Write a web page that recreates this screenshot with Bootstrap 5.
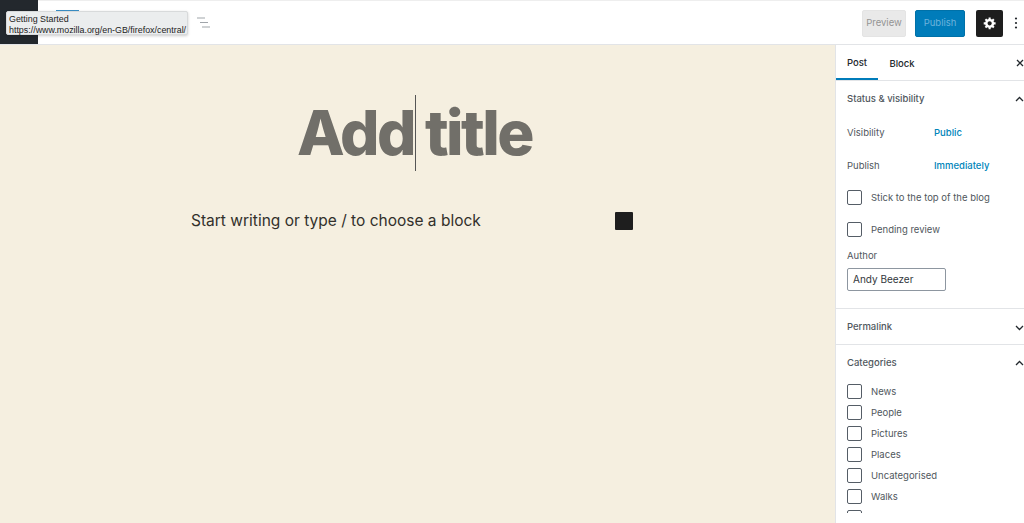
<!DOCTYPE html>
<html lang="en">
<head>
    <meta charset="UTF-8">
    <meta name="viewport" content="width=device-width, initial-scale=1.0">
    <title>Add title</title>
    <link href="https://cdn.jsdelivr.net/npm/bootstrap@5.3.0/dist/css/bootstrap.min.css" rel="stylesheet">
    <style>
        html, body { height: 100%; overflow: hidden; }
        body { font-family: "Inter", "Noto Sans", sans-serif; color: #23282d; background: #fff; }
        .editor-top { height: 45px; border-top: 1px solid #eee; border-bottom: 1px solid #e2e4e7; position: relative; }
        .wp-box { width: 38px; height: 44px; background: #23282d; margin-top: -1px; }
        .blue-tab { width: 23px; height: 2px; background: #3a8fc7; margin: 9px 0 0 18px; }
        .outline-icon { margin: 15px 0 0 117px; }
        .url-tip { position: absolute; left: 6px; top: 10px; width: 182px; height: 24px; padding: 2px 2px 0; background: #ebedee; border: 1px solid #d8dadb; border-radius: 2px; font-family: "Liberation Sans", sans-serif; font-size: 8.9px; line-height: 11px; color: #222; box-shadow: 0 1px 3px rgba(0,0,0,.2); white-space: nowrap; }
        .btn-preview { width: 44px; height: 27px; padding: 0; font-size: 9.5px; background: #e9e9e9; color: #949494; border: 1px solid #e4e4e4; border-radius: 2px; }
        .btn-publish { width: 50px; height: 27px; padding: 0; font-size: 9.5px; background: #007cba; color: #6db3dc; border: 1px solid #0071a8; border-radius: 2px; margin-left: 9px; }
        .btn-gear { width: 27px; height: 27px; padding: 0; background: #1e1e1e; border: 0; border-radius: 2px; display: flex; align-items: center; justify-content: center; margin-left: 11px; }
        .more-dots { margin: 0 6px 0 11px; }
        .editor-body { height: 478px; }
        .canvas-area { background: #f5efe0; }
        .title-row { margin-top: 50px; height: 76px; font-size: 62px; font-weight: 800; letter-spacing: -2.6px; line-height: 76px; color: #716f69; padding-left: 297px; white-space: nowrap; }
        .title-row span { display: inline-block; }
        .caret-line { display: inline-block; width: 1px; height: 76px; background: #555; vertical-align: top; margin: 0 9px 0 1px; }
        .block-row { width: 442px; margin: 38px 0 0 191px; font-size: 15.5px; line-height: 24px; color: #32302b; }
        .block-square { width: 18px; height: 18px; background: #1e1e1e; border-radius: 1px; }
        .side-panel { width: 189px; flex: none; border-left: 1px solid #e2e4e7; overflow: hidden; font-size: 9.5px; color: #50575d; }
        .tab-row { height: 36px; border-bottom: 1px solid #e2e4e7; font-size: 9.5px; color: #23282d; }
        .tab-item { height: 35px; padding-top: 3px; display: flex; align-items: center; justify-content: center; font-weight: 500; }
        .tab-post { width: 42px; border-bottom: 2px solid #007cba; }
        .tab-block { width: 48px; }
        .close-x { margin-left: auto; }
        .panel-part { border-bottom: 1px solid #e2e4e7; }
        .part-head { height: 36px; padding-left: 11px; display: flex; align-items: center; justify-content: space-between; color: #50575d; font-weight: 500; }
        .part-head svg { flex: none; }
        .permalink-head { height: 35px; padding-top: 2px; }
        .info-row { height: 33px; padding-left: 11px; display: flex; align-items: center; }
        .info-row > span:first-child { width: 87px; }
        .info-row a { color: #0085ba; text-decoration: none; font-weight: 500; }
        .tick-row { display: flex; align-items: center; gap: 9px; padding-left: 11px; height: 15px; flex: none; }
        .tick-row span { padding-top: 1px; line-height: 14px; }
        .tick-box { width: 15px; height: 15px; flex: none; border: 1px solid #555d66; border-radius: 2px; background: #fff; }
        .author-input { display: block; width: 99px; height: 23px; margin: 5px 0 0 11px; padding: 0 5px; font-size: 10px; line-height: 21px; color: #32373c; border: 1px solid #8d96a0; border-radius: 2px; }
        .cat-list { height: 129px; overflow: hidden; gap: 6px; margin-top: 3px; }
    </style>
</head>
<body>
    <header class="editor-top d-flex align-items-start">
        <div class="wp-box"></div>
        <div class="blue-tab"></div>
        <svg class="outline-icon" width="16" height="14" viewBox="0 0 16 14" fill="none" stroke="#a0a5aa" stroke-width="1.2">
            <path d="M1 2h8M4 6.500h8M6 11h8"/>
        </svg>
        <div class="url-tip">Getting Started<br>https://www.mozilla.org/en-GB/firefox/central/</div>
        <div class="ms-auto d-flex align-items-center" style="height:44px">
            <button class="btn btn-preview">Preview</button>
            <button class="btn btn-publish">Publish</button>
            <button class="btn btn-gear" aria-label="Settings">
                <svg width="14" height="14" viewBox="0 0 20 20" fill="#fff"><path d="M18 12h-2.180c-.17.7-.44 1.350-.81 1.930l1.540 1.540-2.100 2.100-1.540-1.540c-.58.36-1.230.64-1.910.81V19H8v-2.180c-.68-.17-1.330-.45-1.910-.81l-1.540 1.540-2.100-2.100 1.540-1.540c-.37-.58-.64-1.230-.81-1.910H1V9h2.180c.17-.68.44-1.330.81-1.910L2.450 5.550l2.100-2.100 1.540 1.540c.58-.37 1.230-.64 1.910-.81V2h3v2.180c.68.17 1.330.44 1.910.81l1.540-1.540 2.100 2.100-1.540 1.540c.37.580.64 1.230.81 1.910H18v3zm-8.500 1.500c1.660 0 3-1.340 3-3s-1.340-3-3-3-3 1.340-3 3 1.340 3 3 3z"/></svg>
            </button>
            <svg class="more-dots" width="4" height="14" viewBox="0 0 4 14" fill="#23282d"><circle cx="2" cy="2.500" r="1.100"/><circle cx="2" cy="7" r="1.100"/><circle cx="2" cy="11.500" r="1.100"/></svg>
        </div>
    </header>

    <div class="editor-body d-flex">
        <main class="canvas-area flex-grow-1 overflow-hidden">
            <div class="title-row"><span>Add</span><i class="caret-line"></i><span>title</span></div>
            <div class="block-row d-flex align-items-center justify-content-between">
                <span>Start writing or type / to choose a block</span>
                <div class="block-square"></div>
            </div>
        </main>

        <aside class="side-panel">
            <div class="tab-row d-flex">
                <div class="tab-item tab-post">Post</div>
                <div class="tab-item tab-block">Block</div>
                <svg class="close-x align-self-center" width="8" height="8" viewBox="0 0 8 8" stroke="#23282d" stroke-width="1.300"><path d="M1 1l6 6M7 1L1 7"/></svg>
            </div>

            <section class="panel-part" style="height:228px">
                <div class="part-head"><span>Status &amp; visibility</span>
                    <svg width="9" height="6" viewBox="0 0 9 6" fill="none" stroke="#23282d" stroke-width="1.300"><path d="M1 5l3.500-3.500L8 5"/></svg>
                </div>
                <div class="info-row"><span>Visibility</span><a href="#">Public</a></div>
                <div class="info-row"><span>Publish</span><a href="#">Immediately</a></div>
                <div class="tick-row" style="margin-top:7px"><div class="tick-box"></div><span>Stick to the top of the blog</span></div>
                <div class="tick-row" style="margin-top:17px"><div class="tick-box"></div><span>Pending review</span></div>
                <div style="padding-left:11px;margin-top:12px">Author</div>
                <div class="author-input">Andy Beezer</div>
            </section>

            <section class="panel-part" style="height:36px">
                <div class="part-head permalink-head"><span>Permalink</span>
                    <svg width="9" height="6" viewBox="0 0 9 6" fill="none" stroke="#23282d" stroke-width="1.300"><path d="M1 1l3.500 3.500L8 1"/></svg>
                </div>
            </section>

            <section>
                <div class="part-head"><span>Categories</span>
                    <svg width="9" height="6" viewBox="0 0 9 6" fill="none" stroke="#23282d" stroke-width="1.300"><path d="M1 5l3.500-3.500L8 5"/></svg>
                </div>
                <div id="catList" class="cat-list d-flex flex-column"></div>
            </section>
        </aside>
    </div>

    <script>
        const cats = ['News', 'People', 'Pictures', 'Places', 'Uncategorised', 'Walks', ''];
        const catList = document.getElementById('catList');
        cats.forEach(name => {
            const row = document.createElement('div');
            row.className = 'tick-row';
            row.innerHTML = `<div class="tick-box"></div><span>${name}</span>`;
            catList.appendChild(row);
        });
    </script>
    <script src="https://cdn.jsdelivr.net/npm/bootstrap@5.3.0/dist/js/bootstrap.bundle.min.js"></script>
</body>
</html>
